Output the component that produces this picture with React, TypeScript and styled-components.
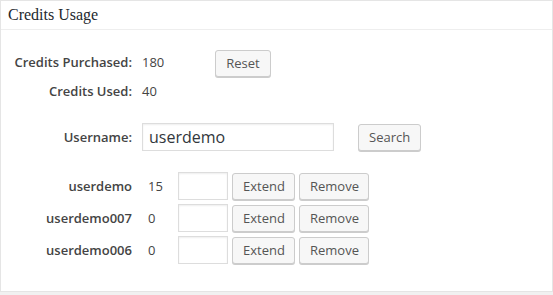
import styled, { createGlobalStyle } from "styled-components";

const GlobalStyle = createGlobalStyle`
  html, body {
    margin: 0;
    padding: 0;
    background: #f1f1f1;
  }
  body {
    font-family: "Open Sans", "Liberation Sans", sans-serif;
    font-size: 13px;
    color: #444;
  }
`;

const Postbox = styled.div`
  width: 553px;
  box-sizing: border-box;
  background: #fff;
  border: 1px solid #e5e5e5;
  box-shadow: 0 1px 1px rgba(0, 0, 0, 0.04);
  height: 292px;
`;

const Header = styled.h2`
  margin: 0;
  height: 29px;
  box-sizing: border-box;
  padding: 0 7px;
  border-bottom: 1px solid #eee;
  display: flex;
  align-items: center;
  font-family: "Liberation Serif", "DejaVu Serif", serif;
  font-size: 16px;
  font-weight: 400;
  color: #23282d;
`;

const Inside = styled.div`
  padding-top: 16px;
`;

const Row = styled.div<{ $height: number; $gap?: number }>`
  display: flex;
  align-items: center;
  height: ${(p) => p.$height}px;
  margin-bottom: ${(p) => p.$gap ?? 0}px;
`;

const Label = styled.span`
  width: 131px;
  text-align: right;
  font-weight: 600;
  color: #444;
  flex-shrink: 0;
`;

const Value = styled.span<{ $width: number; $indent: number }>`
  width: ${(p) => p.$width}px;
  padding-left: ${(p) => p.$indent}px;
  box-sizing: border-box;
  color: #444;
  flex-shrink: 0;
`;

const Button = styled.button<{ $width: number; $ml?: number; $mt?: number }>`
  width: ${(p) => p.$width}px;
  height: 27px;
  margin-left: ${(p) => p.$ml ?? 0}px;
  margin-top: ${(p) => p.$mt ?? 0}px;
  padding: 0 10px 1px;
  font-family: "Open Sans", "Liberation Sans", sans-serif;
  font-size: 13px;
  color: #555;
  background: #f7f7f7;
  border: 1px solid #ccc;
  border-radius: 3px;
  box-shadow: 0 1px 0 #ccc;
  cursor: pointer;
`;

const TextInput = styled.input<{ $width: number; $ml?: number }>`
  width: ${(p) => p.$width}px;
  height: 28px;
  margin-left: ${(p) => p.$ml ?? 0}px;
  box-sizing: border-box;
  padding: 0 6px;
  font-family: "Open Sans", "Liberation Sans", sans-serif;
  font-size: 16px;
  color: #32373c;
  border: 1px solid #ddd;
  box-shadow: inset 0 1px 2px rgba(0, 0, 0, 0.07);
  outline: none;
`;

const users = [
  { name: "userdemo", credits: 15 },
  { name: "userdemo007", credits: 0 },
  { name: "userdemo006", credits: 0 },
];

export default function App() {
  return (
    <>
      <GlobalStyle />
      <Postbox>
        <Header>Credits Usage</Header>
        <Inside>
          <Row $height={31}>
            <Label>Credits Purchased:</Label>
            <Value $width={83} $indent={10}>180</Value>
            <Button $width={56} $mt={4}>Reset</Button>
          </Row>
          <Row $height={28} $gap={18}>
            <Label>Credits Used:</Label>
            <Value $width={83} $indent={10}>40</Value>
          </Row>
          <Row $height={28} $gap={21}>
            <Label>Username:</Label>
            <TextInput $width={192} $ml={10} defaultValue="userdemo" />
            <Button $width={63} $ml={24}>Search</Button>
          </Row>
          {users.map((u) => (
            <Row key={u.name} $height={28} $gap={4}>
              <Label>{u.name}</Label>
              <Value $width={46} $indent={16}>{u.credits}</Value>
              <TextInput $width={50} />
              <Button $width={63} $ml={4}>Extend</Button>
              <Button $width={70} $ml={4}>Remove</Button>
            </Row>
          ))}
        </Inside>
      </Postbox>
    </>
  );
}
